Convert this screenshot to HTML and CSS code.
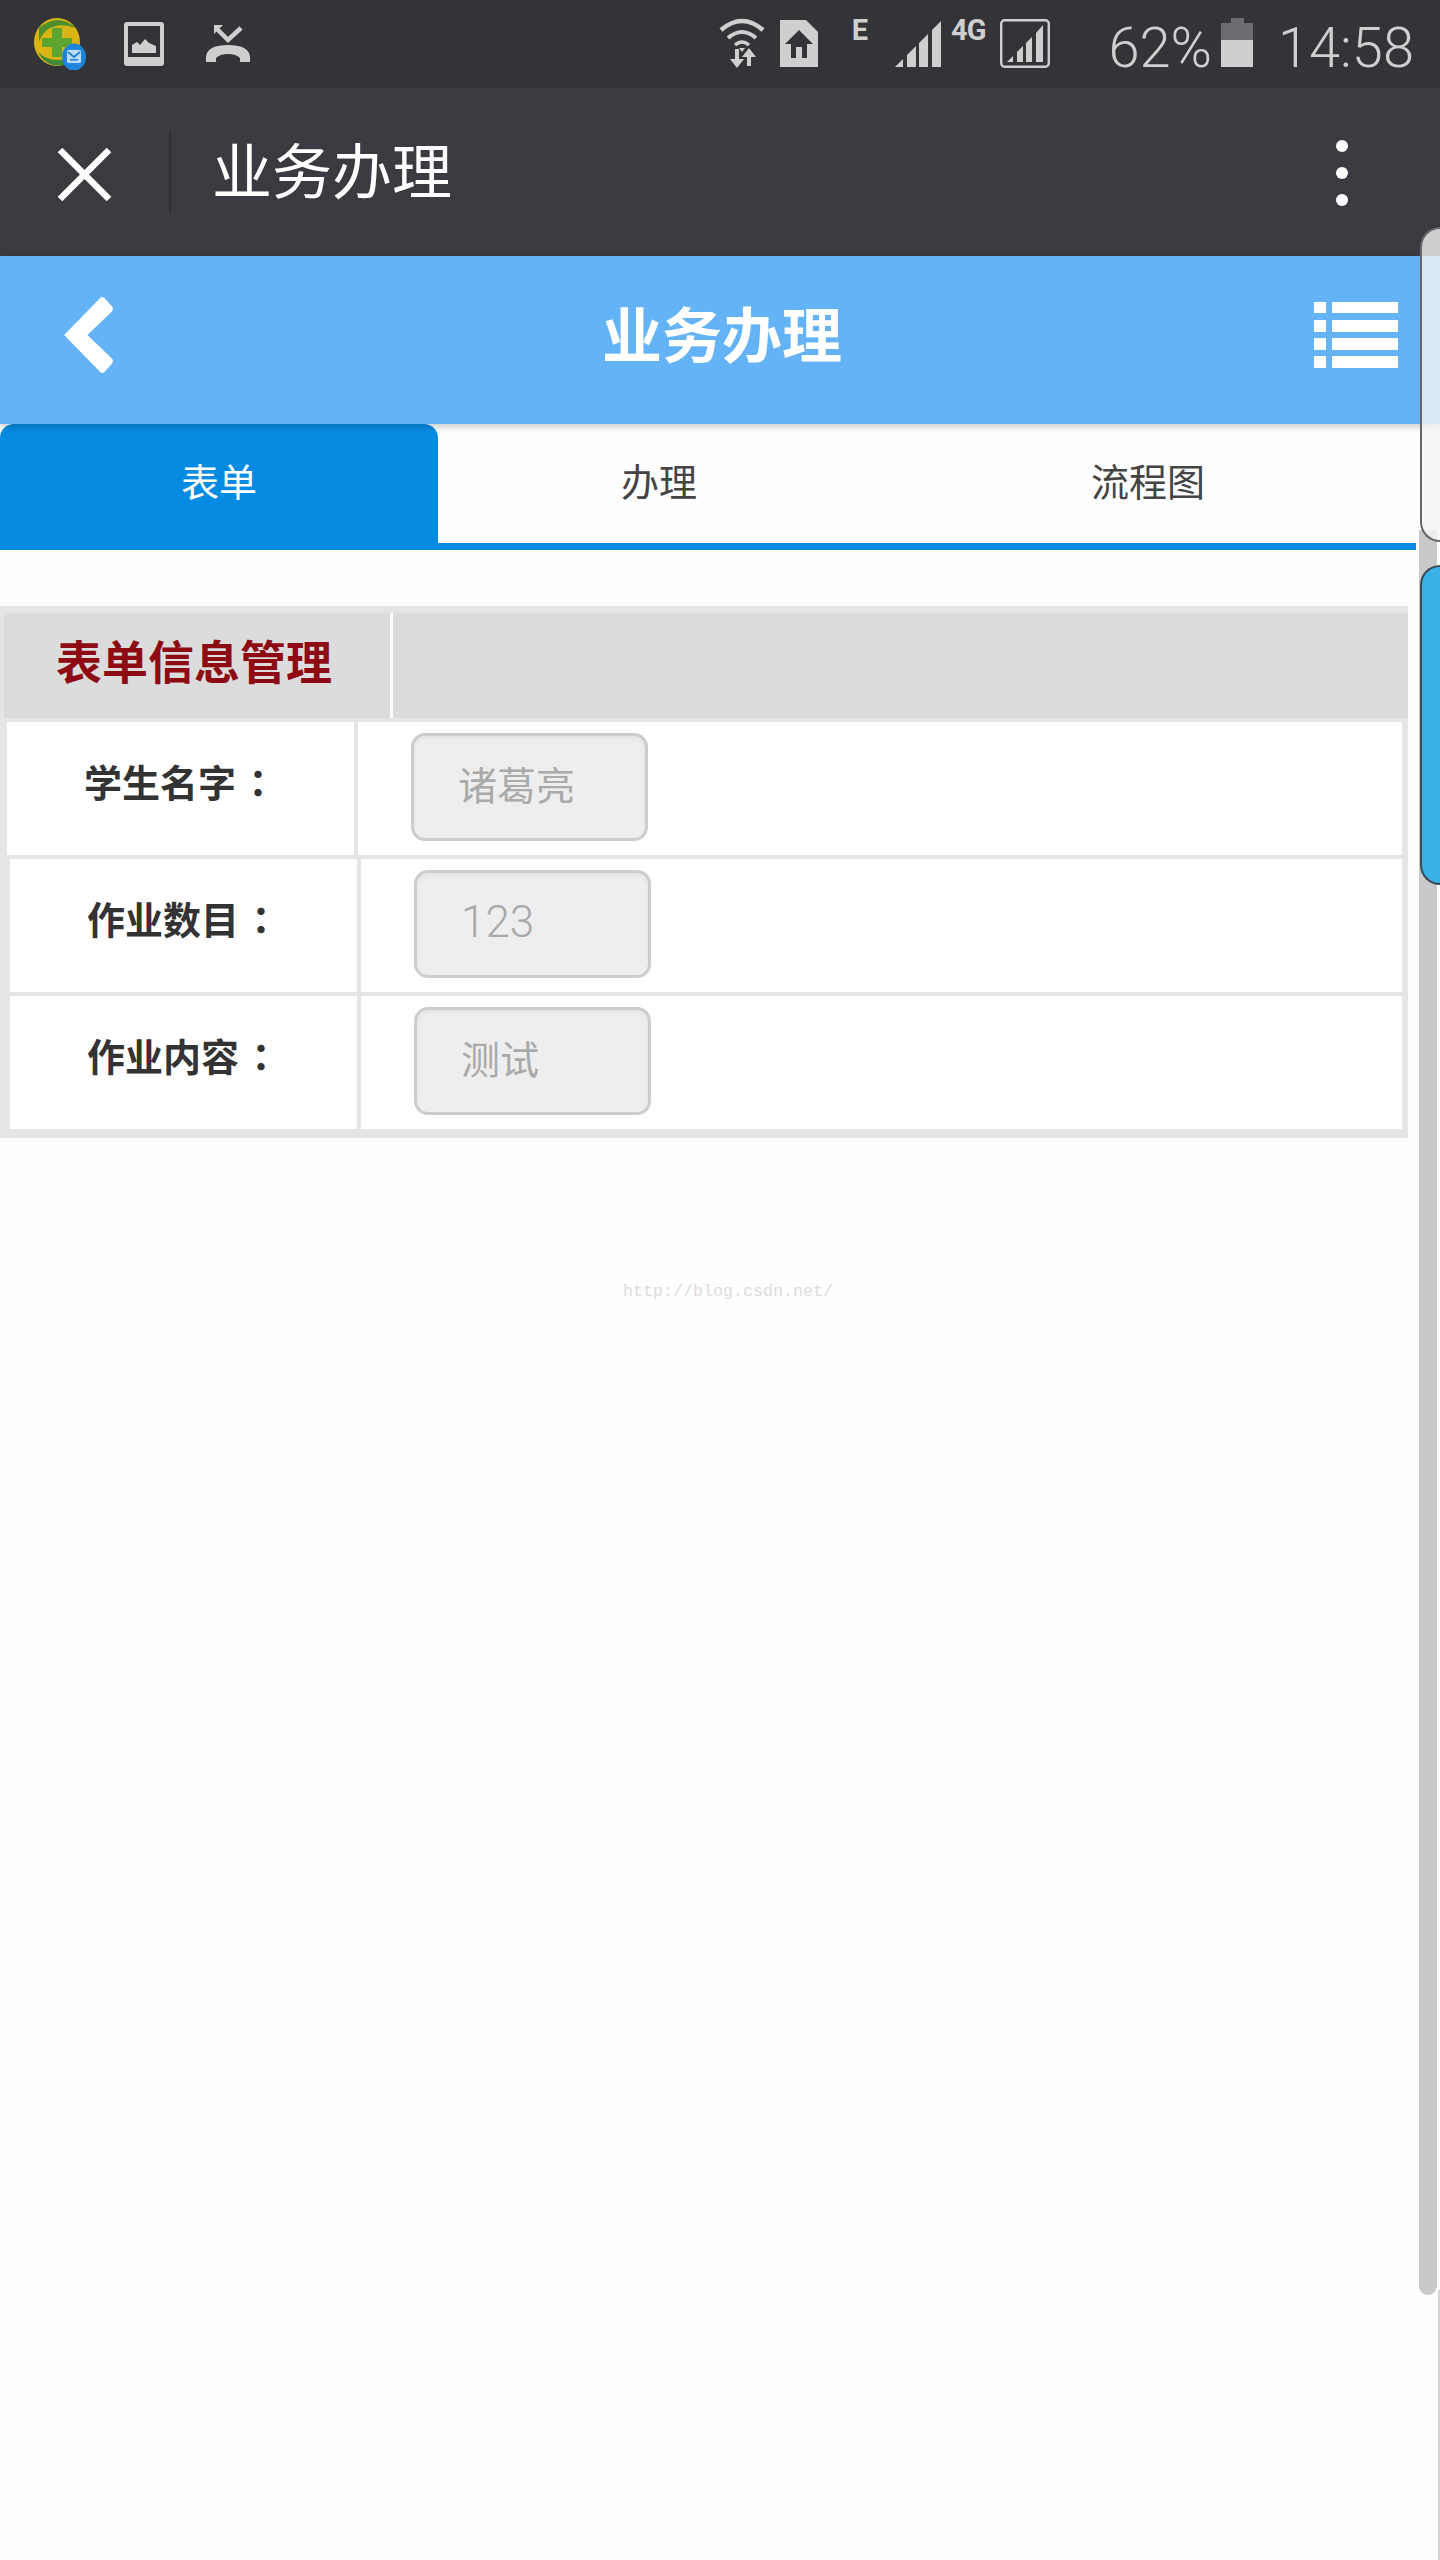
FILE: index.html
```html
<!DOCTYPE html>
<html lang="zh-CN">
<head>
<meta charset="utf-8">
<title>业务办理</title>
<link rel="stylesheet" href="styles.css">
</head>
<body>
<div class="screen">
  <div class="status-bar">
    <div class="status-left">
      <svg class="ico-app" viewBox="0 0 52 52">
        <ellipse cx="23" cy="24" rx="23" ry="24" fill="#d9b412"/>
        <path d="M5 10 Q24 -6 42 10 Q30 6 22 8 Q10 10 5 24Z" fill="#4f8f2e"/>
        <path d="M4 34 Q16 46 36 40 L30 47 Q12 50 4 34Z" fill="#3f8a34"/>
        <path d="M18 10h10v10h10v9H28v10H18V29H8v-9h10z" fill="#5da52f"/>
        <ellipse cx="40" cy="39" rx="12" ry="13.5" fill="#1f84dc"/>
        <rect x="33" y="32" width="14" height="13" rx="1.5" fill="#bfdcf5"/>
        <path d="M34 34l6 5 6-5" fill="none" stroke="#1f84dc" stroke-width="2"/>
        <rect x="36" y="41" width="8" height="1.6" fill="#1f84dc"/>
      </svg>
      <svg class="ico-image" viewBox="0 0 40 44">
        <rect width="40" height="44" rx="3" fill="#cfcfcf"/>
        <rect x="4" y="4" width="32" height="31" fill="#333438"/>
        <path d="M8 31V23l5-3 3 3 5-6 4 4 7 3v7z" fill="#cfcfcf"/>
      </svg>
      <svg class="ico-call" viewBox="0 0 44 37">
        <path d="M0 37V31Q2 20 22 20T44 31V37H34V33Q30 29 22 29T10 33V37Z" fill="#cfcfcf"/>
        <path d="M10 3L22 15L35 3" fill="none" stroke="#cfcfcf" stroke-width="4.5"/>
        <path d="M8 0H17L8 9Z" fill="#cfcfcf"/>
      </svg>
    </div>
    <div class="status-right">
      <svg class="ico-wifi" viewBox="0 0 48 51">
        <g fill="none" stroke="#cfcfcf">
          <path d="M3 13Q24 -5 45 13" stroke-width="4.5"/>
          <path d="M10 21Q24 9 38 21" stroke-width="4"/>
          <path d="M17 28Q24 22 31 28" stroke-width="3.5"/>
        </g>
        <path d="M21 31h6l-3 4z" fill="#cfcfcf"/>
        <path d="M17 32h4v10h5l-7 9-7-9h5z" fill="#cfcfcf"/>
        <path d="M31 31l7 9h-5v9h-4v-9h-5z" fill="#cfcfcf"/>
      </svg>
      <svg class="ico-sim" viewBox="0 0 38 47">
        <path d="M0 0H26L38 12V47H0Z" fill="#cfcfcf"/>
        <path d="M19 10L33 24H27V38H11V24H5Z" fill="#333438"/>
        <rect x="16" y="27" width="6" height="11" fill="#cfcfcf"/>
      </svg>
      <span class="net net-e">E</span>
      <svg class="ico-signal" viewBox="0 0 47 46">
        <path d="M0 46L8 38V46ZM12 34L21 25V46H12ZM24 22L33 13V46H24ZM37 9L46 0V46H37Z" fill="#cfcfcf"/>
      </svg>
      <span class="net net-4g">4G</span>
      <svg class="ico-signal-box" viewBox="0 0 50 49">
        <rect x="1.2" y="1.2" width="47.6" height="46.6" rx="3.5" fill="none" stroke="#cfcfcf" stroke-width="2.4"/>
        <path d="M7 43L13 37V43ZM17 33L23 27V43H17ZM26 24L32 18V43H26ZM36 14L43 6V43H36Z" fill="#cfcfcf"/>
      </svg>
      <span class="clock-text battery-text">62%</span>
      <svg class="ico-battery" viewBox="0 0 32 49">
        <rect x="10" width="13" height="5" fill="#6c6d70"/>
        <rect y="5" width="32" height="17" fill="#6c6d70"/>
        <rect y="22" width="32" height="27" fill="#cfcfcf"/>
      </svg>
      <span class="clock-text time-text">14:58</span>
    </div>
  </div>

  <div class="app-bar">
    <svg class="ico-close" viewBox="0 0 55 55">
      <path d="M3 3L52 52M52 3L3 52" stroke="#fff" stroke-width="6.5" fill="none"/>
    </svg>
    <span class="app-divider"></span>
    <span class="app-title">业务办理</span>
    <div class="kebab"><i></i><i></i><i></i></div>
  </div>

  <header class="page-header">
    <svg class="ico-back" viewBox="0 0 49 76" preserveAspectRatio="none">
      <path d="M2 38L36 2Q38 0 40 2L47 10Q49 13 47 15L24 38L47 61Q49 63 47 66L40 74Q38 76 36 74Z" fill="#fff"/>
    </svg>
    <h1 class="page-title">业务办理</h1>
    <svg class="ico-list" viewBox="0 0 84 66">
      <path d="M0 0h12v11H0zM18 0h66v11H18zM0 18h12v12H0zM18 18h66v12H18zM0 36h12v12H0zM18 36h66v12H18zM0 54h12v12H0zM18 54h66v12H18z" fill="#fff"/>
    </svg>
  </header>

  <nav class="tabs">
    <a class="tab tab-form is-active">表单</a>
    <a class="tab tab-handle">办理</a>
    <a class="tab tab-flow">流程图</a>
  </nav>

  <section class="form-table">
    <div class="form-head">
      <div class="form-head-title">表单信息管理</div>
      <div class="form-head-rest"></div>
    </div>
    <div class="form-rows">
      <div class="form-row row-first">
        <div class="row-label">学生名字<span class="colon">：</span></div>
        <div class="row-value"><div class="field">诸葛亮</div></div>
      </div>
      <div class="form-row">
        <div class="row-label">作业数目<span class="colon">：</span></div>
        <div class="row-value"><div class="field field-num">123</div></div>
      </div>
      <div class="form-row">
        <div class="row-label">作业内容<span class="colon">：</span></div>
        <div class="row-value"><div class="field">测试</div></div>
      </div>
    </div>
  </section>

  <p class="watermark">http://blog.csdn.net/</p>

  <div class="edge-line"></div>
  <div class="edge-thumb"></div>
  <div class="edge-handle"></div>
  <div class="edge-blue"></div>
</div>
</body>
</html>
```

FILE: styles.css
```css
* { box-sizing: border-box; }
html, body { margin: 0; padding: 0; background: #fefefe; }
body { font-family: "Noto Sans CJK SC", "Noto Sans", sans-serif; }
svg { display: block; flex: none; }

.screen { position: relative; width: 1440px; height: 2560px; overflow: hidden; background: #fefefe; }

/* status bar */
.status-bar { display: flex; justify-content: space-between; height: 88px; padding: 0 26px 0 34px; background: #333438; }
.status-left, .status-right { display: flex; align-items: flex-start; }
.ico-app { width: 52px; height: 52px; margin-top: 18px; }
.ico-image { width: 40px; height: 44px; margin: 22px 0 0 38px; }
.ico-call { width: 44px; height: 37px; margin: 25px 0 0 42px; }
.ico-wifi { width: 48px; height: 51px; margin-top: 17px; }
.ico-sim { width: 38px; height: 47px; margin: 20px 0 0 14px; }
.ico-signal { width: 47px; height: 46px; margin: 21px 0 0 27px; }
.ico-signal-box { width: 50px; height: 49px; margin: 19px 0 0 15px; }
.ico-battery { width: 32px; height: 49px; margin: 18px 0 0 9px; }
.net { font-family: Roboto, sans-serif; font-weight: 700; font-size: 29px; line-height: 29px; color: #cfcfcf; margin-top: 16px; }
.net-e { margin-left: 34px; }
.net-4g { margin-left: 9px; letter-spacing: -1px; }
.clock-text { font-family: Roboto, sans-serif; font-weight: 300; font-size: 56px; line-height: 56px; color: #cfcfcf; margin-top: 20px; }
.battery-text { margin-left: 58px; }
.time-text { margin-left: 25px; }

/* app bar */
.app-bar { display: flex; align-items: center; height: 168px; padding: 0 92px 0 57px; background: #3a3b40; }
.ico-close { width: 55px; height: 55px; margin-top: 5px; }
.app-divider { width: 2px; height: 84px; margin-left: 57px; background: #2f3034; }
.app-title { margin: 0 0 8px 41px; font-size: 60px; line-height: 80px; color: #fff; }
.kebab { display: flex; flex-direction: column; gap: 15px; margin-left: auto; margin-top: 2px; }
.kebab i { display: block; width: 12px; height: 12px; border-radius: 50%; background: #fff; }

/* page header */
.page-header { position: relative; z-index: 2; display: grid; grid-template-columns: 1fr auto 1fr; align-items: center; height: 168px; padding: 0 42px 10px 46px; background: #63b3f6; box-shadow: 0 3px 7px rgba(0, 0, 0, .2); }
.ico-back { width: 52px; height: 78px; margin-left: 16px; }
.page-title { margin: 0 0 6px; font-size: 60px; line-height: 80px; font-weight: 700; color: #fff; }
.ico-list { width: 84px; height: 66px; justify-self: end; }

/* tabs */
.tabs { display: flex; width: 1416px; height: 126px; border-bottom: 7px solid #068be3; }
.tab { display: flex; align-items: center; justify-content: center; font-size: 38px; color: #444; padding-bottom: 8px; }
.tab-form { width: 438px; }
.tab-handle { width: 442px; }
.tab-flow { flex: 1; }
.tab.is-active { color: #fff; background: #068be3; border-radius: 14px 14px 0 0; }

/* form table */
.form-table { width: 1408px; margin-top: 56px; padding-top: 7px; height: 532px; background: #e5e5e5; }
.form-head { display: flex; height: 105px; margin-left: 4px; background: #dcdcdc; }
.form-head-title { width: 386px; padding: 0 0 0 52px; font-size: 46px; line-height: 92px; font-weight: 700; color: #8e0b14; white-space: nowrap; }
.form-head-rest { flex: 1; border-left: 3px solid #fff; }
.form-rows { display: flex; flex-direction: column; gap: 3.5px; margin: 4px 6px 0 10px; }
.form-row { display: flex; gap: 4px; height: 133.4px; }
.row-first { margin-left: -3px; }
.row-label { display: flex; align-items: center; width: 347px; padding: 0 0 16px 77px; background: #fff; font-size: 38px; font-weight: 700; color: #333; }
.colon { margin-left: 3px; font-family: "Noto Sans CJK TC", sans-serif; }
.row-value { flex: 1; padding: 11px 0 0 53px; background: #fff; }
.field { display: flex; align-items: center; width: 237px; height: 108px; padding: 0 0 8px 44px; border: 3px solid #cdcdcd; border-radius: 14px; background: #eee; box-shadow: inset 0 2px 4px rgba(0, 0, 0, .05); font-size: 39px; color: #aaa; }
.field-num { padding-bottom: 4px; font-family: Roboto, sans-serif; font-size: 44px; font-weight: 300; }

/* watermark */
.watermark { margin: 143px 0 0 16px; text-align: center; font-family: "Liberation Mono", monospace; font-size: 16.67px; line-height: 22px; color: #dcdcdc; }

/* edge overlays */
.edge-line { position: absolute; z-index: 3; top: 2290px; right: 0; bottom: 0; width: 2px; background: #d4d4d4; }
.edge-thumb { position: absolute; z-index: 3; top: 530px; left: 1419px; width: 18px; height: 1765px; background: #c9c9c9; border-radius: 0 0 9px 9px; }
.edge-handle { position: absolute; z-index: 3; top: 227px; left: 1420px; width: 20px; height: 315px; border: 2px solid #666; border-right: 0; border-radius: 28px 0 0 28px; background: rgba(245, 245, 245, .8); }
.edge-blue { position: absolute; z-index: 3; top: 565px; left: 1420px; width: 20px; height: 320px; border: 2px solid #3d4a55; border-right: 0; border-radius: 28px 0 0 28px; background: #37b1e6; }
```
